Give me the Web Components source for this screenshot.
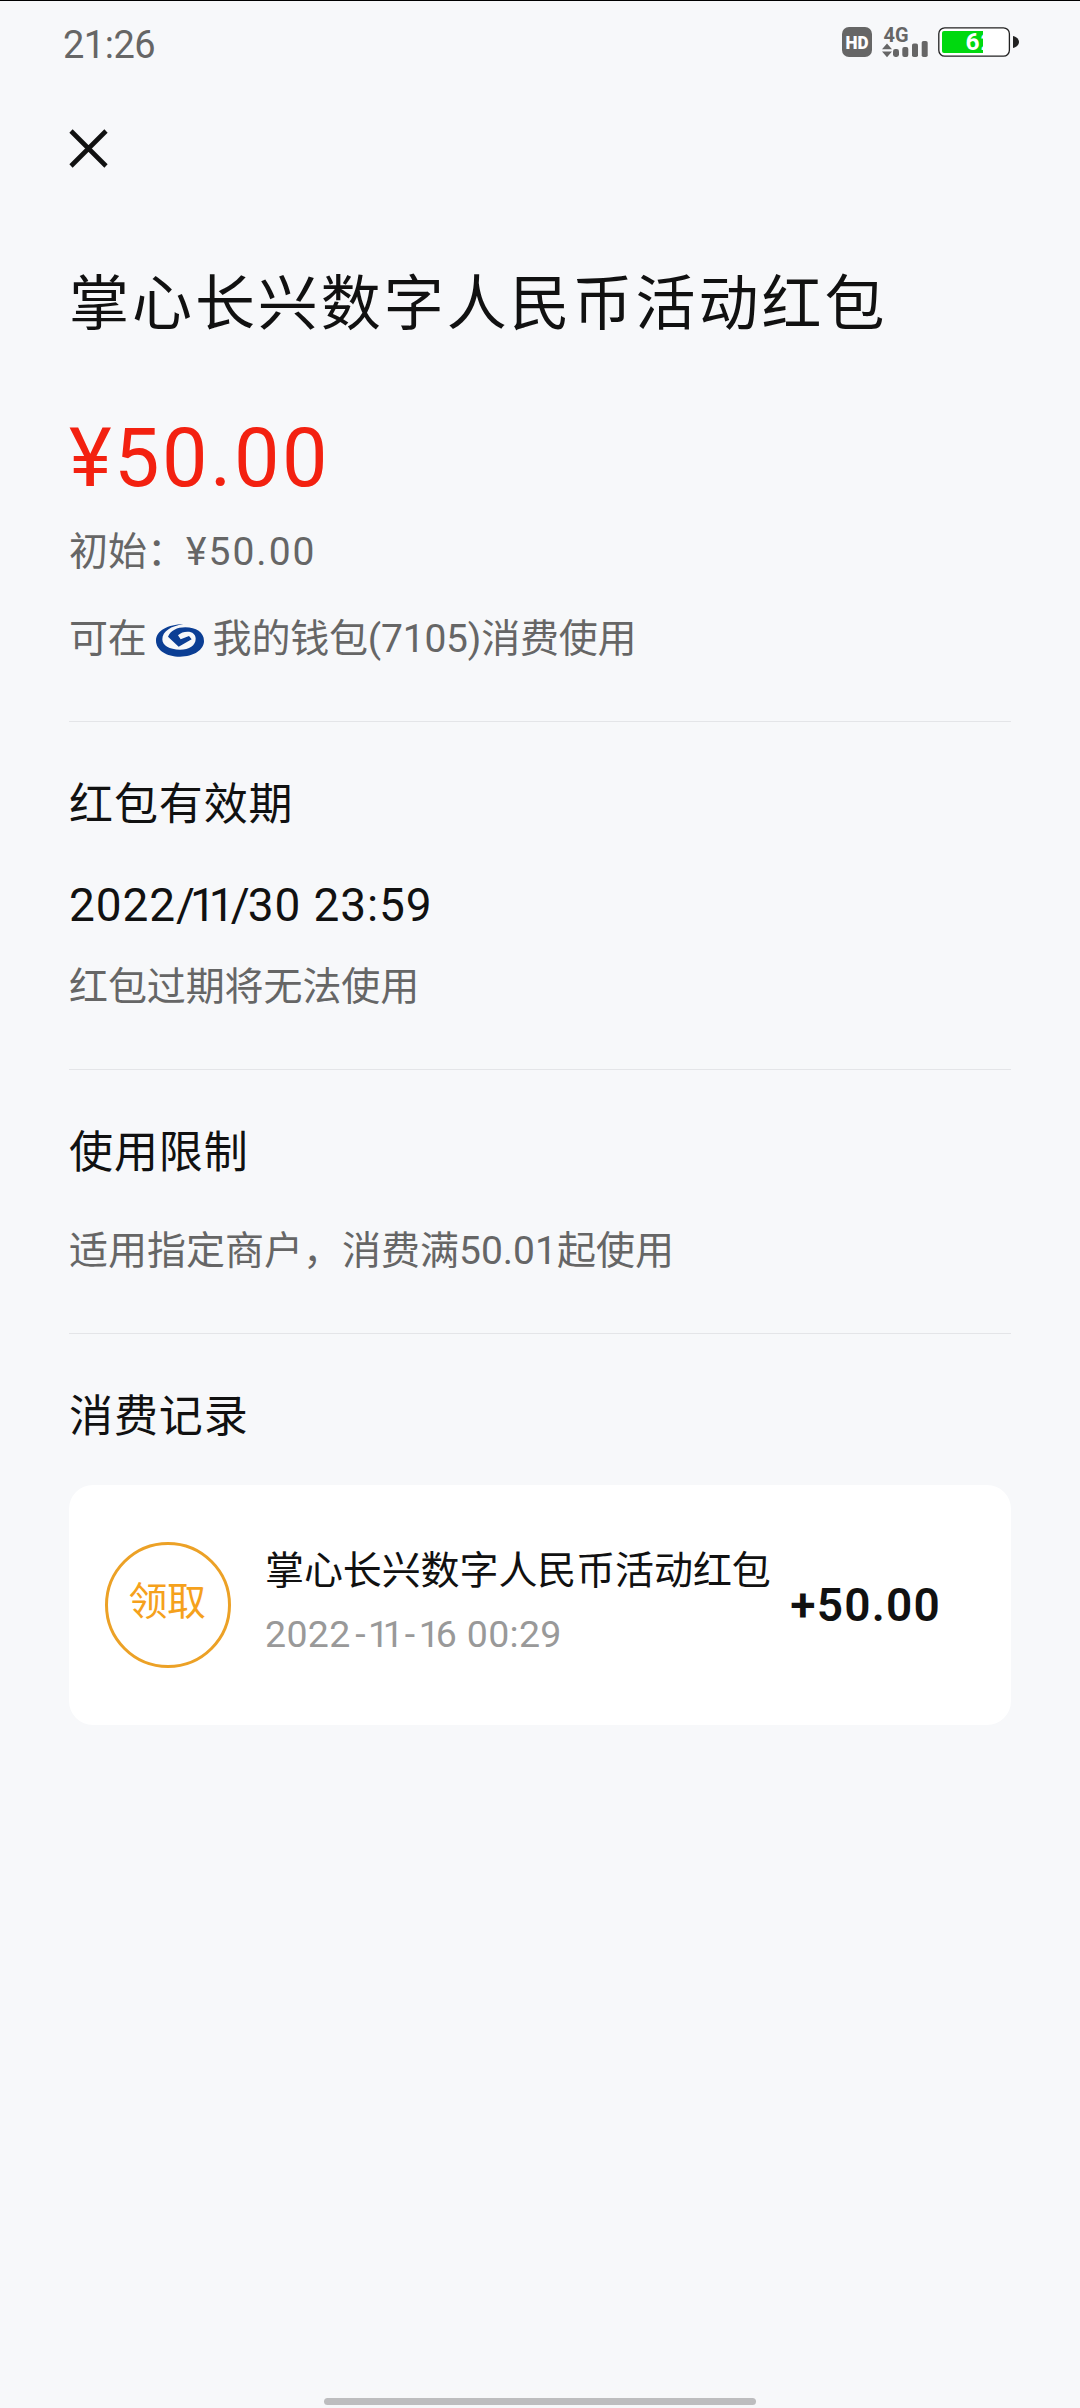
<!DOCTYPE html>
<html lang="zh-CN">
<head>
<meta charset="utf-8">
<title>红包详情</title>
<style>
html,body{margin:0;padding:0;background:#f7f8fa}
body{font-family:Roboto,"Noto Sans CJK SC",sans-serif;color:#111}
</style>
</head>
<body>
<red-packet-page></red-packet-page>
<script>
const define = (name, html) => customElements.define(name, class extends HTMLElement {
  constructor() {
    super();
    const t = document.createElement('template');
    t.innerHTML = html;
    this.attachShadow({ mode: 'open' }).appendChild(t.content.cloneNode(true));
  }
});

define('status-bar', `
<style>
:host{display:flex;justify-content:space-between;box-sizing:border-box;height:90px;border-top:1px solid #000;padding:16px 61px 0 63px;color:#666}
.time{font-size:38px;line-height:36px;height:36px;margin-top:10px;letter-spacing:-.5px}
svg{display:block;width:180px;height:52px}
</style>
<div class="time">21:26</div>
<svg viewBox="840 17 180 52" font-family="Roboto,sans-serif">
  <rect x="843" y="27" width="30" height="30" rx="7" fill="#666"/>
  <text x="858" y="48.700" font-size="18.500" font-weight="900" fill="#fff" text-anchor="middle" textLength="23" lengthAdjust="spacingAndGlyphs">HD</text>
  <text x="884.500" y="41.500" font-size="19.500" font-weight="700" fill="#666" textLength="25" lengthAdjust="spacingAndGlyphs">4G</text>
  <path d="M888 43.500l5 5.800h-10zM888 57.300l-5-5.800h10z" fill="#666"/>
  <g fill="#666"><rect x="894" y="49" width="6" height="8" rx="2.400"/><rect x="903.300" y="47" width="6" height="10" rx="2"/><rect x="913" y="43.500" width="6" height="13.500" rx="1.800"/><rect x="922.700" y="41" width="6" height="16" rx="1.800"/></g>
  <rect x="939.800" y="27.800" width="70.600" height="28.400" rx="6" fill="#fff" stroke="#222" stroke-width="1.300"/>
  <path d="M943 33a2 2 0 0 1 2-2h39v22h-39a2 2 0 0 1-2-2z" fill="#00d90f"/>
  <text x="966.500" y="50.200" font-size="24.500" font-weight="700" fill="#fff" letter-spacing="1">62</text>
  <path d="M1014 36c4 1 6 3.500 6 6s-2 5-6 6z" fill="#222"/>
</svg>`);

define('nav-bar', `
<style>:host{display:block;height:175px;padding:38px 0 0 68px;box-sizing:border-box}svg{display:block}</style>
<svg width="42" height="42" viewBox="0 0 42 42"><path d="M3 3L38 38M38 3L3 38" stroke="#111" stroke-width="4.600"/></svg>`);

define('wallet-logo', `
<style>:host{display:block;width:48px;height:33px}svg{display:block}</style>
<svg width="48" height="33" viewBox="33 42 144 97">
  <path d="M118 42C72 41 33 60 33 91c0 28 32 48 72 48s72-20 72-47c0-26-24-41-56-41-25 0-44 10-52 28l32 30 39-22-8-10-25 10-8-12c8-8 18-11 28-11 16 0 25 8 25 21 0 20-19 33-47 33-32 0-53-13-53-31 0-24 26-40 63-45z" fill="#0b3e94"/>
</svg>`);

define('packet-summary', `
<style>
:host{display:block;height:456px;border-bottom:1px solid #e4e5e8}
h1{margin:0;font-weight:400;font-size:60px;line-height:80px;letter-spacing:2.950px;color:#111}
.price{margin-top:66px;font-size:81px;line-height:96px;letter-spacing:2.500px;color:#f32110}
.line{display:flex;align-items:center;height:56px;font-size:39px;line-height:56px;color:#666}
.initial{margin-top:17px}
.initial ::slotted(*){white-space:pre}
.wallet{margin-top:31px;letter-spacing:-.2px}
wallet-logo{margin:3px 9px 0 9px}
</style>
<h1><slot name="title"></slot></h1>
<div class="price"><slot name="amount"></slot></div>
<div class="line initial"><slot name="initial"></slot></div>
<div class="line wallet"><span>可在</span><wallet-logo></wallet-logo><span><slot name="wallet"></slot></span></div>`);

define('info-section', `
<style>
:host{display:block;padding:53px 0 54px;border-bottom:1px solid #e4e5e8}
:host([last]){border:0;padding-bottom:0}
h2{margin:0;font-weight:400;font-size:44px;line-height:60px;letter-spacing:.900px;color:#111}
::slotted([slot=value]){display:block;margin-top:40px;font-size:46px;line-height:60px;letter-spacing:.9px;color:#111}
::slotted([slot=note]){display:block;margin-top:24px;font-size:39px;line-height:56px;letter-spacing:-.1px;color:#666}
::slotted([slot=note].only){margin-top:40px;letter-spacing:0}
</style>
<h2><slot name="heading"></slot></h2><slot name="value"></slot><slot name="note"></slot><slot></slot>`);

define('record-card', `
<style>
:host{display:flex;align-items:center;box-sizing:border-box;height:240px;margin-top:38px;padding:0 70px 0 36px;border-radius:24px;background:#fff}
.badge{box-sizing:border-box;width:126px;height:126px;border:3px solid #eca126;border-radius:50%;padding-right:2px;font-size:39px;line-height:114px;text-align:center;color:#f5a11c;letter-spacing:-.4px}
.body{margin:-9px 0 0 34px;flex:1;white-space:nowrap}
.name{font-size:39px;line-height:56px;color:#111;letter-spacing:-.1px}
.date{font-size:37.500px;line-height:48px;margin-top:11px;color:#999;letter-spacing:.3px}
.sum{font-size:46px;line-height:60px;font-weight:600;letter-spacing:1.200px;color:#111}
</style>
<div class="badge"><slot name="badge"></slot></div>
<div class="body"><div class="name"><slot name="name"></slot></div><div class="date"><slot name="date"></slot></div></div>
<div class="sum"><slot name="sum"></slot></div>`);

/* Letter spacing for a few characters: <kern-text by="-7">1</kern-text> */
customElements.define('kern-text', class extends HTMLElement {
  constructor() {
    super();
    this.attachShadow({ mode: 'open' }).innerHTML = '<style>:host{display:inline}</style><slot></slot>';
  }
  connectedCallback() { this.style.letterSpacing = this.getAttribute('by') + 'px'; }
});

define('home-indicator', `
<style>:host{display:block;width:432px;height:7px;margin:auto auto 3px;border-radius:4px;background:#bdbdbf}</style>`);

define('red-packet-page', `
<style>
:host{display:flex;flex-direction:column;width:1080px;height:2408px;background:#f7f8fa;overflow:hidden}
main{padding:0 69px 0}
</style>
<status-bar></status-bar>
<nav-bar></nav-bar>
<main>
  <packet-summary>
    <span slot="title">掌心长兴数字人民币活动红包</span>
    <span slot="amount">¥50.00</span>
    <span slot="initial">初始：<kern-text by="2">¥50.00</kern-text></span>
    <span slot="wallet">我的钱包(7105)消费使用</span>
  </packet-summary>
  <info-section>
    <span slot="heading">红包有效期</span>
    <span slot="value">2022<kern-text by="-5">/</kern-text><kern-text by="-7">1</kern-text><kern-text by="-4">1</kern-text><kern-text by="-2">/</kern-text>30 23:59</span>
    <span slot="note">红包过期将无法使用</span>
  </info-section>
  <info-section>
    <span slot="heading">使用限制</span>
    <span slot="note" class="only">适用指定商户，消费满50.01起使用</span>
  </info-section>
  <info-section last>
    <span slot="heading">消费记录</span>
    <record-card>
      <span slot="badge">领取</span>
      <span slot="name">掌心长兴数字人民币活动红包</span>
      <span slot="date">202<kern-text by="5">2</kern-text><kern-text by="2.500">-</kern-text><kern-text by="-6.500">1</kern-text><kern-text by="1">1</kern-text><kern-text by="3.600">-</kern-text><kern-text by="-4">1</kern-text>6 00:29</span>
      <span slot="sum">+50.00</span>
    </record-card>
  </info-section>
</main>
<home-indicator></home-indicator>`);
</script>
</body>
</html>
